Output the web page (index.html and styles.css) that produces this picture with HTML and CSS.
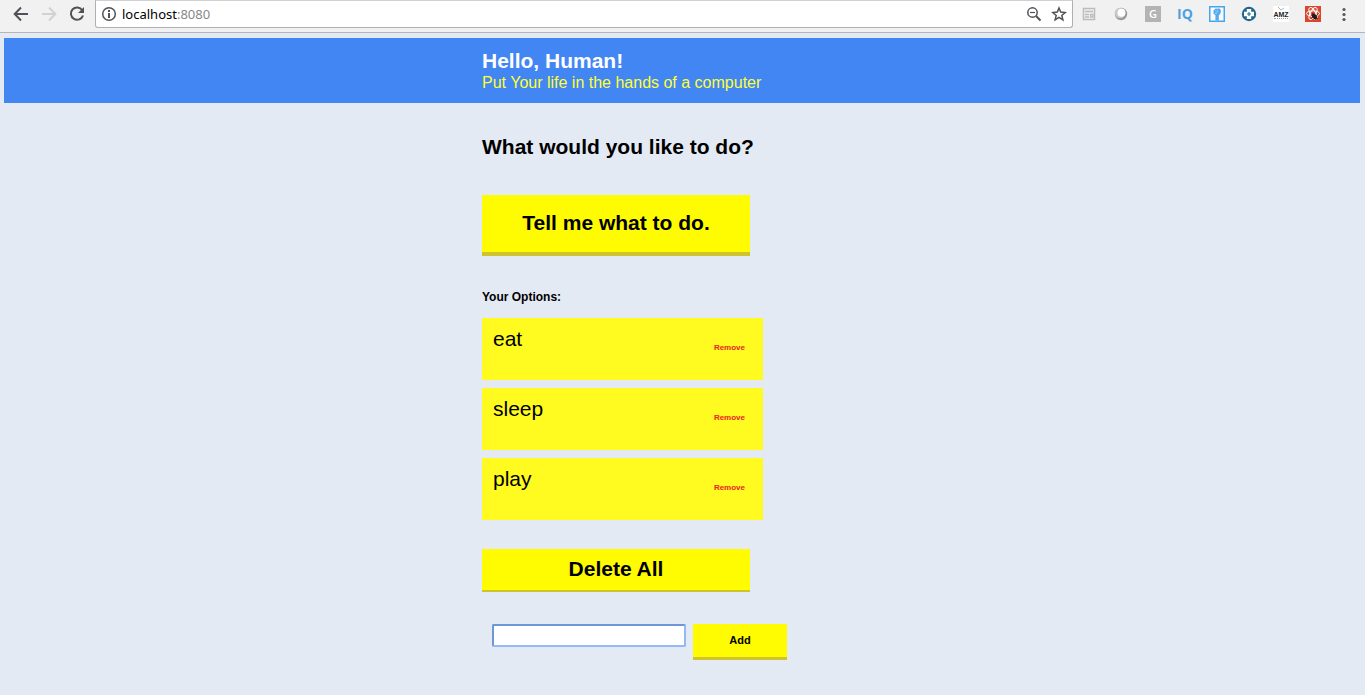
FILE: index.html
```html
<!DOCTYPE html>
<html lang="en">
<head>
<meta charset="utf-8">
<title>Hello, Human!</title>
<link rel="stylesheet" href="styles.css">
</head>
<body>
<div class="toolbar">
  <div class="nav">
    <button class="icon-btn" aria-label="Back"><svg width="16" height="16" viewBox="0 0 16 16" fill="none" stroke="#4f5256" stroke-width="2"><path d="M15 8H2M8 1.500L1.700 8L8 14.500"/></svg></button>
    <button class="icon-btn" aria-label="Forward" disabled><svg width="16" height="16" viewBox="0 0 16 16" fill="none" stroke="#d2d2d3" stroke-width="2"><path d="M1 8H14M8 1.500L14.300 8L8 14.500"/></svg></button>
    <button class="icon-btn" aria-label="Reload"><svg width="16" height="16" viewBox="0 0 16 16"><path d="M13.300 4.200A6.200 6.200 0 1 0 14 9.500" fill="none" stroke="#4f5256" stroke-width="2"/><path d="M15 1V7H9Z" fill="#4f5256"/></svg></button>
  </div>
  <div class="address">
    <svg width="16" height="16" viewBox="0 0 16 16"><circle cx="8" cy="8" r="6.300" fill="none" stroke="#4f5256" stroke-width="1.500"/><path d="M7 4h2v2H7zM7 7h2v5H7z" fill="#4f5256"/></svg>
    <span class="url">localhost<span class="port">:8080</span></span>
    <button class="icon-btn" aria-label="Zoom"><svg width="16" height="16" viewBox="0 0 16 16" fill="none" stroke="#4f5256"><circle cx="6.500" cy="6.500" r="4.700" stroke-width="1.500"/><path d="M4 6.500h5" stroke-width="1.200"/><path d="M10 10l4.500 4.500" stroke-width="2"/></svg></button>
    <button class="icon-btn" aria-label="Bookmark"><svg width="16" height="16" viewBox="0 0 16 16" fill="none" stroke="#4f5256" stroke-width="1.500"><path d="M8 2L9.700 6.100L14.200 6.500L10.800 9.400L11.900 13.800L8 11.400L4.100 13.800L5.200 9.400L1.800 6.500L6.300 6.100Z"/></svg></button>
  </div>
  <div class="extensions">
    <svg width="16" height="16" viewBox="0 0 16 16" fill="none" stroke="#bcbcbc"><rect x="2.500" y="2.500" width="11" height="11" stroke-width="1.500"/><path d="M4 5.500h8M4 8.500h4M4 11h4M9.500 8.500h2.500v2.500H9.500z" stroke-width="1.300"/></svg>
    <svg width="16" height="16" viewBox="0 0 16 16"><circle cx="8" cy="8" r="6.200" fill="#999"/><circle cx="7" cy="7" r="5.200" fill="#c9c9c9"/><circle cx="8.500" cy="6.800" r="4" fill="#fff"/></svg>
    <span class="ext-g">G</span>
    <span class="ext-iq">IQ</span>
    <svg width="16" height="16" viewBox="0 0 16 16"><rect x=".75" y=".75" width="14.500" height="14.500" fill="#f7fbff" stroke="#49a5e9" stroke-width="1.500"/><path d="M4.500 4.500l2-2 2 .2 1.500-.4 1.500 1.200.5 1.500-.6 2.500-1.700 2.200.3 4.800H6.300l.2-5L4.500 7.500z" fill="#58abeb"/><path d="M6.700 4.500l.5 1.200M8.700 4v1.500M6 7.500l2.500-.7" stroke="#d9edfc" stroke-width=".6"/></svg>
    <svg width="16" height="16" viewBox="0 0 16 16"><circle cx="8" cy="8" r="7.200" fill="#23658f"/><path d="M5.800 3h4.400v2.800H13v4.400h-2.800V13H5.800v-2.800H3V5.800h2.800z" fill="#fff"/><path d="M8 6v4M6 8h4" stroke="#2b739c" stroke-width="1.200"/></svg>
    <span class="ext-amz"><svg width="16" height="5" viewBox="0 0 16 5"><path d="M5 1l3 3" stroke="#e59b9b"/><path d="M8 4l3-2" stroke="#8cc5d5"/></svg>AMZ<span class="amz-line"></span></span>
    <svg width="16" height="16" viewBox="0 0 16 16"><path d="M0 0h16v16H0z" fill="#d9472f"/><g fill="none" stroke="#fff"><ellipse cx="8" cy="7.500" rx="6.500" ry="2.700"/><ellipse cx="8" cy="7.500" rx="6.500" ry="2.700" transform="rotate(60 8 7.500)"/><ellipse cx="8" cy="7.500" rx="6.500" ry="2.700" transform="rotate(120 8 7.500)"/></g><ellipse cx="9.500" cy="10.500" rx="2.200" ry="3.200" transform="rotate(-35 9.500 10.500)" fill="#271817"/><path d="M6 9l7 4M6 12.500l7-4M7.500 7l3.500 7" stroke="#271817" stroke-width=".8"/></svg>
    <button class="icon-btn" aria-label="Menu"><svg width="16" height="16" viewBox="0 0 16 16" fill="#55565b"><circle cx="7" cy="3.500" r="1.600"/><circle cx="7" cy="8.500" r="1.600"/><circle cx="7" cy="13.500" r="1.600"/></svg></button>
  </div>
</div>
<div class="page">
  <header class="header">
    <div class="container">
      <h1 class="title">Hello, Human!</h1>
      <p class="subtitle">Put Your life in the hands of a computer</p>
    </div>
  </header>
  <main class="container">
    <h2 class="question">What would you like to do?</h2>
    <button class="btn decide">Tell me what to do.</button>
    <h3 class="options-title">Your Options:</h3>
    <ul class="options">
      <li class="option"><span>eat</span><button class="remove">Remove</button></li>
      <li class="option"><span>sleep</span><button class="remove">Remove</button></li>
      <li class="option"><span>play</span><button class="remove">Remove</button></li>
    </ul>
    <button class="btn delete">Delete All</button>
    <form class="add-form">
      <input class="field" type="text" aria-label="New option">
      <button class="btn add" type="button">Add</button>
    </form>
  </main>
</div>
</body>
</html>
```
FILE: styles.css
```css
* { box-sizing: border-box; }
body {
  margin: 0;
  min-height: 100vh;
  background: #e3eaf4;
  color: #000;
  font-family: "Liberation Sans", Arial, sans-serif;
}
h1, h2, h3, p, ul { margin: 0; padding: 0; }
button { font-family: inherit; border: 0; padding: 0; }
svg { display: block; flex: none; }

.toolbar {
  display: flex;
  align-items: flex-start;
  height: 33px;
  background: #f1f1f1;
  border-bottom: 1px solid #b5b4b8;
}
.nav { display: flex; gap: 12px; padding: 6px 10px 0 13px; }
.icon-btn { display: block; background: none; }
.address {
  flex: 1;
  display: flex;
  align-items: center;
  gap: 9px;
  height: 28px;
  padding: 0 5px;
  background: #fff;
  border: 1px solid #b0b0b2;
  border-top-color: #d0d0d2;
  border-radius: 0 0 3px 3px;
}
.url {
  flex: 1;
  margin-left: -4px;
  font-family: "Noto Sans", "Open Sans", sans-serif;
  font-size: 13px;
  line-height: 20px;
}
.port { color: #888; }
.extensions { display: flex; gap: 16px; padding: 6px 12px 0 8px; }
.ext-g, .ext-iq, .ext-amz { width: 16px; height: 16px; text-align: center; }
.ext-g {
  background: #b3b3b3;
  color: #fff;
  font-family: "Open Sans", sans-serif;
  font-size: 11px;
  font-weight: 600;
  line-height: 16px;
}
.ext-iq {
  display: flex;
  justify-content: center;
  color: #4da0dc;
  font-family: "Open Sans", sans-serif;
  font-size: 14px;
  font-weight: bold;
  line-height: 16px;
}
.ext-amz {
  display: flex;
  flex-direction: column;
  align-items: center;
  background: #fff;
  color: #222;
  font-size: 7px;
  font-weight: bold;
  line-height: 7px;
}
.amz-line { width: 14px; border-top: 1px dotted #999; }

.page { padding: 5px 5px 0 4px; }
.container { width: 100%; max-width: 400px; margin: 0 auto; }
.header { padding: 11px 0; background: #4286f4; }
.title { color: #fff; font-size: 21px; line-height: 24px; }
.subtitle { color: #ffff33; font-size: 16px; line-height: 19px; }
.question { margin-top: 32px; font-size: 21px; line-height: 24px; }
.btn {
  display: block;
  background: #fffb00;
  color: #000;
  font-weight: bold;
  border-bottom: 4px solid #cec52e;
}
.decide, .delete { width: 67%; padding-bottom: 2px; font-size: 21px; line-height: 24px; }
.decide { margin-top: 36px; height: 61px; }
.options-title { margin-top: 32px; font-size: 12px; line-height: 18px; }
.options { display: grid; gap: 8px; margin-top: 12px; list-style: none; }
.option {
  display: flex;
  justify-content: space-between;
  align-items: flex-start;
  width: 281px;
  max-width: 100%;
  height: 62px;
  padding: 9px 18px 0 11px;
  background: #fffb20;
  font-size: 21px;
  line-height: 24px;
}
.remove {
  margin-top: 15px;
  background: none;
  color: #e22;
  font-size: 8px;
  font-weight: bold;
  line-height: 12px;
}
.delete { margin-top: 29px; height: 43px; border-bottom-width: 2px; }
.add-form {
  display: flex;
  align-items: flex-start;
  gap: 7px;
  margin-top: 32px;
  padding-left: 10px;
}
.field {
  width: 194px;
  height: 23px;
  padding: 1px 4px;
  background: #fff;
  border: 2px solid #95b9f4;
  border-top-color: #6f97d8;
  border-left-color: #6f97d8;
  border-radius: 2px;
  font-size: 13px;
}
.add { width: 94px; height: 36px; padding-bottom: 2px; border-bottom-width: 3px; font-size: 11px; }
```
